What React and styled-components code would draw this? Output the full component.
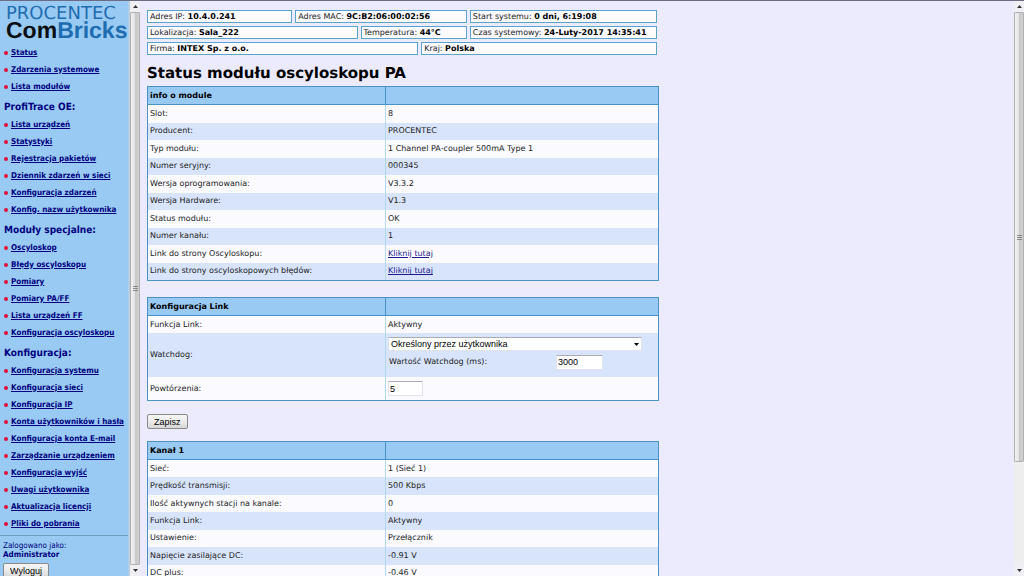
import styled, { createGlobalStyle } from "styled-components";

const GlobalStyle = createGlobalStyle`
  * {
    box-sizing: border-box;
  }

  body {
    margin: 0;
    background: #ebebfd;
    color: #1c1c24;
    font-family: "DejaVu Sans", Verdana, sans-serif;
    font-size: 8px;
    line-height: 10px;
    text-rendering: geometricPrecision;
  }
`;

const Page = styled.div`
  display: flex;
  height: 100vh;
  border-top: 1px solid #6c6c84;
`;

const Sidebar = styled.nav`
  flex: 0 0 130px;
  padding: 5px 0 0 4px;
  overflow-y: auto;
  scrollbar-width: none;
  background: #98caf3;
  border-right: 2px solid #b4cfe4;
  color: #000080;
  font-family: "DejaVu Sans Condensed", "DejaVu Sans", Verdana, sans-serif;
`;

const Logo = styled.div`
  padding-left: 2px;
  height: 38px;
  white-space: nowrap;
`;

const LogoTop = styled.div`
  color: #1f6cb0;
  font-family: "DejaVu Sans", Verdana, sans-serif;
  font-size: 18px;
  line-height: 16px;
`;

const LogoBottom = styled.div`
  color: #0a0f14;
  font-family: "Liberation Sans", Arial, sans-serif;
  font-size: 23px;
  font-weight: bold;
  line-height: 16px;

  span {
    color: #1f6cb0;
  }
`;

const MenuTitle = styled.h2`
  margin: 0;
  padding-top: 4px;
  font-size: 10px;
  line-height: 17px;
`;

const Menu = styled.ul`
  margin: 0;
  padding: 0;
  list-style: none;
`;

const MenuItem = styled.li`
  display: flex;
  align-items: center;
  gap: 3px;
  height: 17px;
  white-space: nowrap;

  &::before {
    content: "";
    flex: none;
    width: 4px;
    height: 4px;
    border-radius: 50%;
    background: #e0103c;
  }

  a {
    color: #000080;
    font-weight: bold;
  }
`;

const UserBox = styled.div`
  margin: 3px 0 0 -4px;
  padding: 5px 0 0 3px;
  border-top: 1px solid #6f9dbd;
  line-height: 9px;

  p {
    margin: 0 0 4px;
  }

  b {
    display: block;
  }
`;

const Button = styled.button`
  display: block;
  height: 15px;
  padding: 0 6px;
  border: 1px solid #8b8b8b;
  border-radius: 2px;
  background: linear-gradient(#f5f5f5, #ececec 50%, #d6d6d6);
  color: #000;
  font-family: "Liberation Sans", Tahoma, sans-serif;
  font-size: 9px;
  line-height: 12px;
`;

const ScrollTrack = styled.div`
  flex: 0 0 10px;
  display: flex;
  flex-direction: column;
  background: #eeeeee;
`;

const ScrollArrow = styled.div`
  flex: 0 0 11px;
  display: flex;
  align-items: center;
  justify-content: center;
  background: #f0f0f4;
`;

const ScrollSpace = styled.div`
  flex: ${(props) => props.$size} 1 0;
  display: flex;
  align-items: center;
  justify-content: center;
`;

const ScrollThumb = styled(ScrollSpace)`
  border: 1px solid #b0b0b0;
  border-radius: 1px;
  background: linear-gradient(90deg, #f2f2f2, #e4e4e6 45%, #c8c8ca 55%, #d0d0d0);
`;

const Main = styled.main`
  flex: 1;
  min-width: 0;
  padding: 9px 7px 0;
  overflow-y: auto;
  scrollbar-width: none;
`;

const Content = styled.div`
  max-width: 512px;
`;

const InfoBar = styled.div`
  display: flex;
  flex-direction: column;
  gap: 3px;
  margin-right: 2px;
`;

const InfoRow = styled.div`
  display: flex;
  gap: 3px;
`;

const InfoBox = styled.div`
  flex: ${(props) => props.$size} 1 0;
  height: 13px;
  padding-left: 2px;
  border: 1px solid #5aa5d0;
  background: #fafaff;
  line-height: 11px;
  white-space: nowrap;

  b {
    color: #000;
  }
`;

const Title = styled.h1`
  margin: 8px 0 3px;
  color: #000;
  font-size: 15px;
  line-height: 20px;
`;

const Table = styled.table`
  width: 100%;
  height: ${(props) => props.$height}px;
  margin-bottom: 16px;
  border: 1px solid #4a92c4;
  border-spacing: 0;
  table-layout: fixed;

  th,
  td {
    padding: 0 2px;
    text-align: left;
  }

  th:first-child {
    width: 238px;
  }

  thead th {
    height: 18px;
    background: #98caf3;
    border-bottom: 1px solid #4a92c4;
    color: #000;
  }

  thead th:first-child {
    border-right: 1px solid #4a92c4;
  }

  tbody th {
    border-right: 1px solid #b0d8f0;
    font-weight: normal;
  }

  tbody tr {
    background: #fafaff;
  }

  tbody tr:nth-child(even) {
    background: #d8e4fb;
  }

  a {
    color: #1a1a8c;
  }
`;

const Row = styled.tr`
  height: ${(props) => props.$height}px;
`;

const SelectWrap = styled.div`
  position: relative;
  width: 254px;
  margin-bottom: 4px;

  svg {
    position: absolute;
    right: 3px;
    top: 6px;
    pointer-events: none;
  }
`;

const Select = styled.select`
  display: block;
  appearance: none;
  width: 100%;
  height: 14px;
  padding: 0 2px;
  border: 1px solid #e2e3ea;
  border-top-color: #abadb3;
  border-radius: 0;
  background: #fff;
  color: #000;
  font-family: "Liberation Sans", Tahoma, sans-serif;
  font-size: 9px;
  line-height: 12px;
`;

const Input = styled.input`
  display: block;
  width: ${(props) => props.$width}px;
  height: 15px;
  padding: 0 1px;
  border: 1px solid #e2e3ea;
  border-top-color: #abadb3;
  background: #fff;
  color: #000;
  font-family: "Liberation Sans", Tahoma, sans-serif;
  font-size: 9px;
`;

const WatchdogValue = styled.div`
  display: flex;
  align-items: center;
  margin-bottom: 4px;

  label {
    width: 168px;
    padding-left: 1px;
  }
`;

const SaveButton = styled(Button)`
  margin: -3px 0 12px;
`;

const menus = [
  { items: ["Status", "Zdarzenia systemowe", "Lista modułów"] },
  {
    title: "ProfiTrace OE:",
    items: [
      "Lista urządzeń",
      "Statystyki",
      "Rejestracja pakietów",
      "Dziennik zdarzeń w sieci",
      "Konfiguracja zdarzeń",
      "Konfig. nazw użytkownika",
    ],
  },
  {
    title: "Moduły specjalne:",
    items: [
      "Oscyloskop",
      "Błędy oscyloskopu",
      "Pomiary",
      "Pomiary PA/FF",
      "Lista urządzeń FF",
      "Konfiguracja oscyloskopu",
    ],
  },
  {
    title: "Konfiguracja:",
    items: [
      "Konfiguracja systemu",
      "Konfiguracja sieci",
      "Konfiguracja IP",
      "Konta użytkowników i hasła",
      "Konfiguracja konta E-mail",
      "Zarządzanie urządzeniem",
      "Konfiguracja wyjść",
      "Uwagi użytkownika",
      "Aktualizacja licencji",
      "Pliki do pobrania",
    ],
  },
];

const infoRows = [
  [
    ["Adres IP", "10.4.0.241", 145],
    ["Adres MAC", "9C:B2:06:00:02:56", 172],
    ["Start systemu", "0 dni, 6:19:08", 188],
  ],
  [
    ["Lokalizacja", "Sala_222", 212],
    ["Temperatura", "44°C", 105],
    ["Czas systemowy", "24-Luty-2017 14:35:41", 188],
  ],
  [
    ["Firma", "INTEX Sp. z o.o.", 272],
    ["Kraj", "Polska", 236],
  ],
];

const moduleRows = [
  ["Slot:", "8"],
  ["Producent:", "PROCENTEC"],
  ["Typ modułu:", "1 Channel PA-coupler 500mA Type 1"],
  ["Numer seryjny:", "000345"],
  ["Wersja oprogramowania:", "V3.3.2"],
  ["Wersja Hardware:", "V1.3"],
  ["Status modułu:", "OK"],
  ["Numer kanału:", "1"],
  ["Link do strony Oscyloskopu:", <a href="#oscyloskop">Kliknij tutaj</a>],
  ["Link do strony oscyloskopowych błędów:", <a href="#bledy">Kliknij tutaj</a>],
];

const channelRows = [
  ["Sieć:", "1 (Sieć 1)"],
  ["Prędkość transmisji:", "500 Kbps"],
  ["Ilość aktywnych stacji na kanale:", "0"],
  ["Funkcja Link:", "Aktywny"],
  ["Ustawienie:", "Przełącznik"],
  ["Napięcie zasilające DC:", "-0.91 V"],
  ["DC plus:", "-0.46 V"],
];

const Head = ({ title }) => (
  <thead>
    <tr>
      <th scope="col">{title}</th>
      <th></th>
    </tr>
  </thead>
);

const DataTable = ({ title, rows, height }) => (
  <Table $height={height}>
    <Head title={title} />
    <tbody>
      {rows.map(([name, value]) => (
        <Row key={name} $height={17}>
          <th scope="row">{name}</th>
          <td>{value}</td>
        </Row>
      ))}
    </tbody>
  </Table>
);

const Scrollbar = ({ thumb, rest }) => (
  <ScrollTrack aria-hidden="true">
    <ScrollArrow>
      <svg width="5" height="3" viewBox="0 0 5 3">
        <path d="M0 3L2.5 0L5 3Z" fill="#333" />
      </svg>
    </ScrollArrow>
    <ScrollThumb $size={thumb}>
      <svg width="5" height="7" viewBox="0 0 5 7">
        <path d="M0 1.5H5M0 3.5H5M0 5.5H5" stroke="#888" />
      </svg>
    </ScrollThumb>
    {rest > 0 && <ScrollSpace $size={rest} />}
    <ScrollArrow>
      <svg width="5" height="3" viewBox="0 0 5 3">
        <path d="M0 0L2.5 3L5 0Z" fill="#333" />
      </svg>
    </ScrollArrow>
  </ScrollTrack>
);

const App = () => {
  return (
    <Page>
      <GlobalStyle />
      <Sidebar>
        <Logo>
          <LogoTop>PROCENTEC</LogoTop>
          <LogoBottom>
            Com<span>Bricks</span>
          </LogoBottom>
        </Logo>
        {menus.map((menu) => (
          <div key={menu.items[0]}>
            {menu.title && <MenuTitle>{menu.title}</MenuTitle>}
            <Menu>
              {menu.items.map((item) => (
                <MenuItem key={item}>
                  <a href="#menu">{item}</a>
                </MenuItem>
              ))}
            </Menu>
          </div>
        ))}
        <UserBox>
          <p>
            Zalogowano jako: <b>Administrator</b>
          </p>
          <Button type="button">Wyloguj</Button>
        </UserBox>
      </Sidebar>
      <Scrollbar thumb={1} rest={0} />
      <Main>
        <Content>
          <InfoBar>
            {infoRows.map((row) => (
              <InfoRow key={row[0][0]}>
                {row.map(([name, value, size]) => (
                  <InfoBox key={name} $size={size}>
                    {name}: <b>{value}</b>
                  </InfoBox>
                ))}
              </InfoRow>
            ))}
          </InfoBar>
          <Title>Status modułu oscyloskopu PA</Title>
          <DataTable title="info o module" rows={moduleRows} height={195} />
          <Table $height={104}>
            <Head title="Konfiguracja Link" />
            <tbody>
              <Row $height={17}>
                <th scope="row">Funkcja Link:</th>
                <td>Aktywny</td>
              </Row>
              <Row $height={44}>
                <th scope="row">
                  <label htmlFor="watchdog">Watchdog:</label>
                </th>
                <td>
                  <SelectWrap>
                    <Select id="watchdog">
                      <option>Określony przez użytkownika</option>
                    </Select>
                    <svg width="5" height="3" viewBox="0 0 5 3">
                      <path d="M0 0L2.5 3L5 0Z" fill="#000" />
                    </svg>
                  </SelectWrap>
                  <WatchdogValue>
                    <label htmlFor="watchdogMs">Wartość Watchdog (ms):</label>
                    <Input id="watchdogMs" $width={47} defaultValue="3000" />
                  </WatchdogValue>
                </td>
              </Row>
              <Row $height={23}>
                <th scope="row">
                  <label htmlFor="retries">Powtórzenia:</label>
                </th>
                <td>
                  <Input id="retries" $width={35} defaultValue="5" />
                </td>
              </Row>
            </tbody>
          </Table>
          <SaveButton type="button">Zapisz</SaveButton>
          <DataTable title="Kanał 1" rows={channelRows} height={142} />
        </Content>
      </Main>
      <Scrollbar thumb={450} rest={103} />
    </Page>
  );
};

export default App;
